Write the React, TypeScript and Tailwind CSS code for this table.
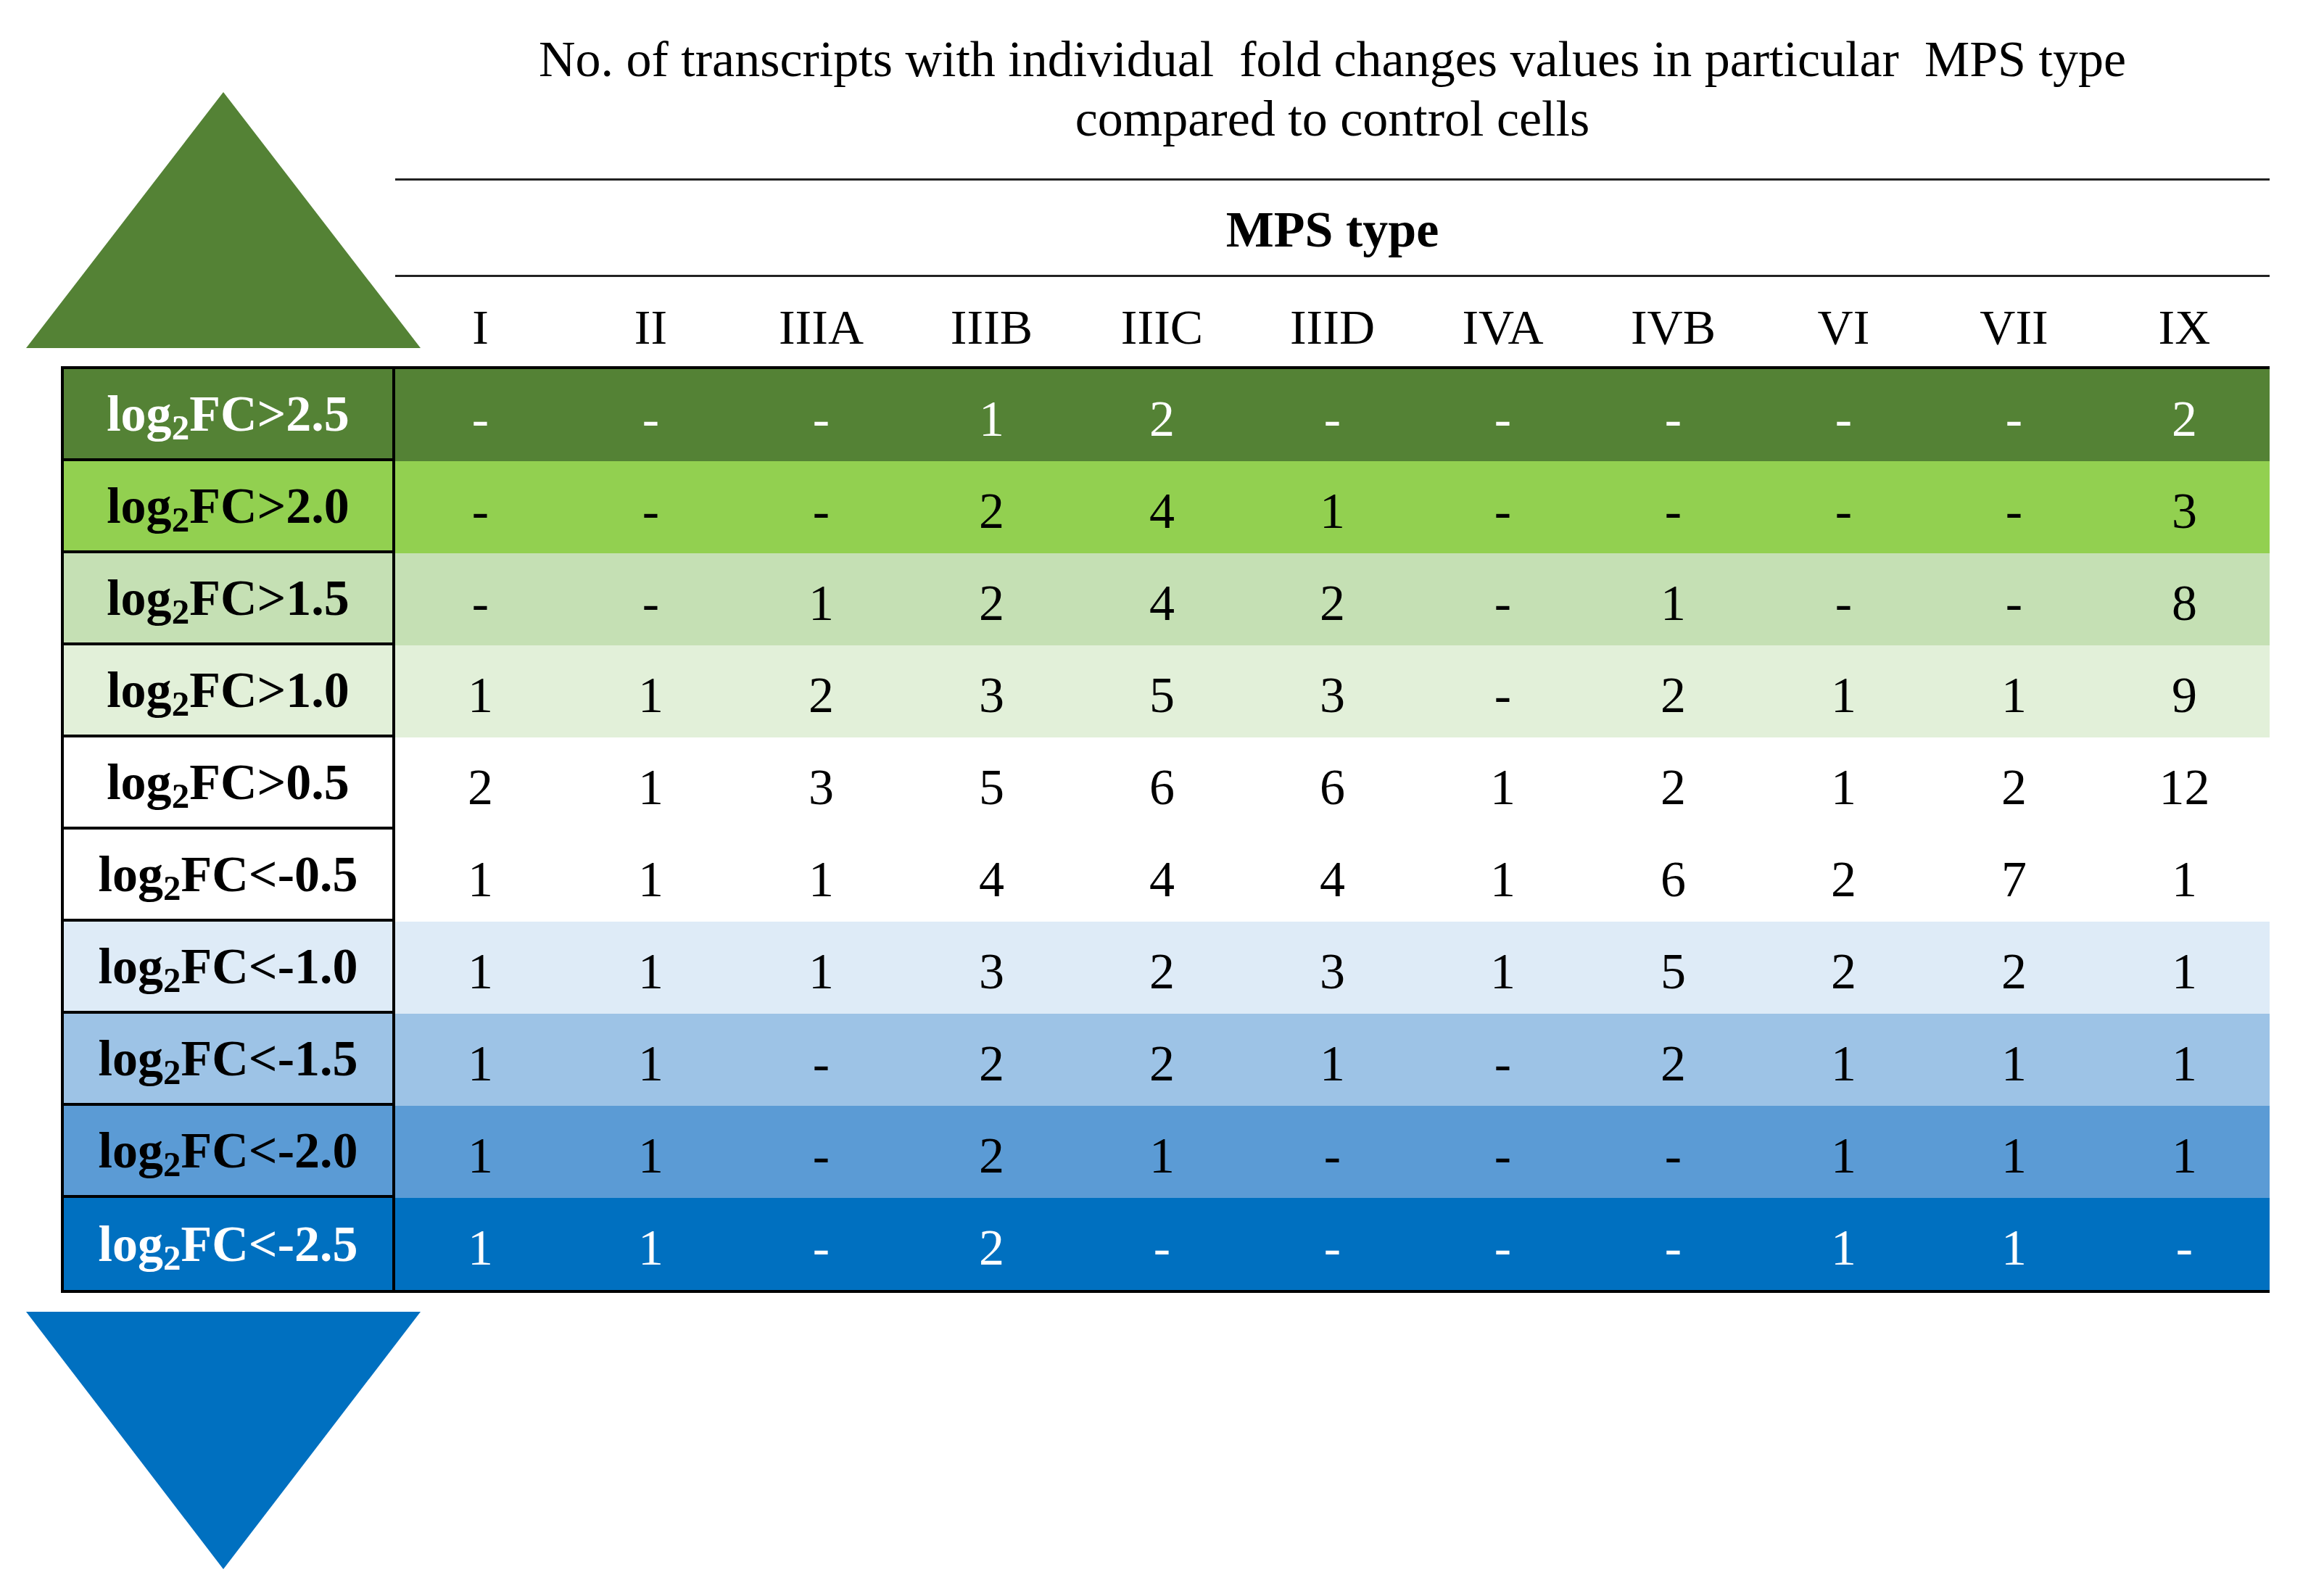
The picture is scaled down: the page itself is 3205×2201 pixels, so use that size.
const types = ['I', 'II', 'IIIA', 'IIIB', 'IIIC', 'IIID', 'IVA', 'IVB', 'VI', 'VII', 'IX']

type Row = {
  op: string
  bg: string
  light?: boolean
  vals: string[]
}

const rows: Row[] = [
  { op: '>2.5', bg: 'bg-[#548235]', light: true, vals: ['-', '-', '-', '1', '2', '-', '-', '-', '-', '-', '2'] },
  { op: '>2.0', bg: 'bg-[#92d050]', vals: ['-', '-', '-', '2', '4', '1', '-', '-', '-', '-', '3'] },
  { op: '>1.5', bg: 'bg-[#c5e0b4]', vals: ['-', '-', '1', '2', '4', '2', '-', '1', '-', '-', '8'] },
  { op: '>1.0', bg: 'bg-[#e2f0d9]', vals: ['1', '1', '2', '3', '5', '3', '-', '2', '1', '1', '9'] },
  { op: '>0.5', bg: 'bg-white', vals: ['2', '1', '3', '5', '6', '6', '1', '2', '1', '2', '12'] },
  { op: '<-0.5', bg: 'bg-white', vals: ['1', '1', '1', '4', '4', '4', '1', '6', '2', '7', '1'] },
  { op: '<-1.0', bg: 'bg-[#deebf7]', vals: ['1', '1', '1', '3', '2', '3', '1', '5', '2', '2', '1'] },
  { op: '<-1.5', bg: 'bg-[#9dc3e6]', vals: ['1', '1', '-', '2', '2', '1', '-', '2', '1', '1', '1'] },
  { op: '<-2.0', bg: 'bg-[#5b9bd5]', vals: ['1', '1', '-', '2', '1', '-', '-', '-', '1', '1', '1'] },
  { op: '<-2.5', bg: 'bg-[#0070c0]', light: true, vals: ['1', '1', '-', '2', '-', '-', '-', '-', '1', '1', '-'] },
]

function Arrow({ up }: { up?: boolean }) {
  return (
    <svg width="544" height="355" viewBox="0 0 544 355" className="block ml-[36px] overflow-visible">
      {up ? (
        <polygon points="272,0 544,353 0,353" fill="#548235" />
      ) : (
        <polygon points="0,0 544,0 272,355" fill="#0070c0" />
      )}
    </svg>
  )
}

export default function App() {
  return (
    <div className="w-[3205px] h-[2201px] bg-white text-black font-['Liberation_Serif','Times_New_Roman',serif]">
      {/* heading block */}
      <div className="flex h-[505px]">
        <div className="w-[545px] shrink-0 pt-[127px]">
          <Arrow up />
        </div>
        <div className="w-[2585px] shrink-0 flex flex-col">
          <div className="pt-[41px] text-[70px] leading-[82px] text-center">
            <p>No. of transcripts with individual{'\u00a0'} fold changes values in particular{'\u00a0'} MPS type</p>
            <p>compared to control cells</p>
          </div>
          <div className="mt-[41px] h-[3px] bg-[#222]" />
          <div className="h-[130px] pt-[6px] flex items-center justify-center text-[70px] font-bold leading-none">
            MPS type
          </div>
          <div className="h-[3px] bg-[#222]" />
          <div className="flex-1 pt-[14px] grid grid-cols-11 items-center text-[68px] leading-none">
            {types.map(t => (
              <div key={t} className="text-center">{t}</div>
            ))}
          </div>
        </div>
      </div>

      {/* table */}
      <div className="ml-[84px] w-[3046px] border-t-4 border-b-4 border-black">
        {rows.map((r, i) => (
          <div key={r.op} className={`flex h-[127px] ${r.bg} ${r.light ? 'text-white' : 'text-black'}`}>
            <div
              className={`w-[461px] shrink-0 border-l-4 border-r-4 border-black flex items-center justify-center text-[70px] font-bold leading-none ${
                i < rows.length - 1 ? 'border-b-4' : ''
              }`}
            >
              <span>
                log<sub className="text-[0.7em]">2</sub>FC{r.op}
              </span>
            </div>
            <div className="flex-1 grid grid-cols-11 items-center pt-[10px] text-[70px] leading-none">
              {r.vals.map((v, j) => (
                <div key={j} className="text-center">{v}</div>
              ))}
            </div>
          </div>
        ))}
      </div>

      <div className="pt-[26px]">
        <Arrow />
      </div>
    </div>
  )
}
